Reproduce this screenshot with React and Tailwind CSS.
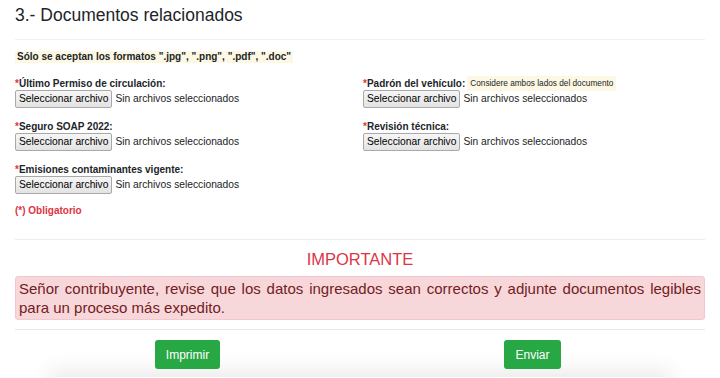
import React from 'react'

const font = { fontFamily: '"Liberation Sans", Arial, Helvetica, sans-serif' }

function FileInput() {
  return (
    <div className="flex items-center h-[18px]">
      <span className="h-[18px] px-[3px] flex items-center border border-[#a9a9a9] rounded-[2px] bg-gradient-to-b from-[#f6f6f6] to-[#e3e3e3] text-[10.25px] text-black leading-none">
        Seleccionar archivo
      </span>
      <span className="ml-[3px] text-[10.25px] text-[#222] leading-none">Sin archivos seleccionados</span>
    </div>
  )
}

function Field({ label, note }) {
  return (
    <div>
      <div className="flex items-center h-[13px] text-[10px] font-bold text-[#212529] leading-[13px]">
        <span className="text-[#dc3545]">*</span>
        <span>{label}</span>
        {note && (
          <span className="ml-[2px] h-[15px] px-[3px] flex items-center bg-[#fcf8e3] text-[8.25px] font-normal text-[#212529]">
            {note}
          </span>
        )}
      </div>
      <FileInput />
    </div>
  )
}

export default function App() {
  return (
    <div className="w-[720px] h-[378px] overflow-hidden bg-white px-[15px]" style={font}>
      <h4 className="pt-[5px] text-[17.5px] leading-[21px] text-[#212529] font-normal">3.- Documentos relacionados</h4>

      <div className="mt-[13px] h-px bg-[#f0f0f0]" />

      <div className="mt-[11px] flex">
        <span className="h-[12px] px-[2px] bg-[#fcf8e3] text-[10px] leading-[12px] font-bold text-[#212529]">
          Sólo se aceptan los formatos ".jpg", ".png", ".pdf", ".doc"
        </span>
      </div>

      <div className="mt-[14px] grid grid-cols-[348px_1fr] gap-y-[12px]">
        <Field label="Último Permiso de circulación:" />
        <Field label="Padrón del vehículo:" note="Considere ambos lados del documento" />
        <Field label="Seguro SOAP 2022:" />
        <Field label="Revisión técnica:" />
        <Field label="Emisiones contaminantes vigente:" />
      </div>

      <p className="mt-[10px] text-[10px] leading-[13px] font-bold text-[#dc3545]">(*) Obligatorio</p>

      <div className="mt-[22px] h-px bg-[#ececec]" />

      <h5 className="mt-[9px] text-center text-[16.5px] leading-[20px] text-[#dc3545]">IMPORTANTE</h5>

      <div className="mt-[7px] px-[3px] py-[2px] rounded-[3px] border border-[#f5c6cb] bg-[#f8d7da] text-[#721c24] text-[15px] leading-[19px] text-justify">
        Señor contribuyente, revise que los datos ingresados sean correctos y adjunte documentos legibles para un proceso más expedito.
      </div>

      <div className="mt-[9px] h-px bg-[#e6e6e6]" />

      <div className="mt-[10px] grid grid-cols-2">
        <div className="flex justify-center">
          <button className="h-[29px] px-[11px] rounded-[3px] bg-[#28a745] text-white text-[12px] font-medium">Imprimir</button>
        </div>
        <div className="flex justify-center">
          <button className="h-[29px] px-[11px] rounded-[3px] bg-[#28a745] text-white text-[12px] font-medium">Enviar</button>
        </div>
      </div>

      <div className="mt-[8px] mx-[40px] h-[40px] bg-white shadow-[0_0_22px_6px_rgba(0,0,0,0.09)]" />
    </div>
  )
}
